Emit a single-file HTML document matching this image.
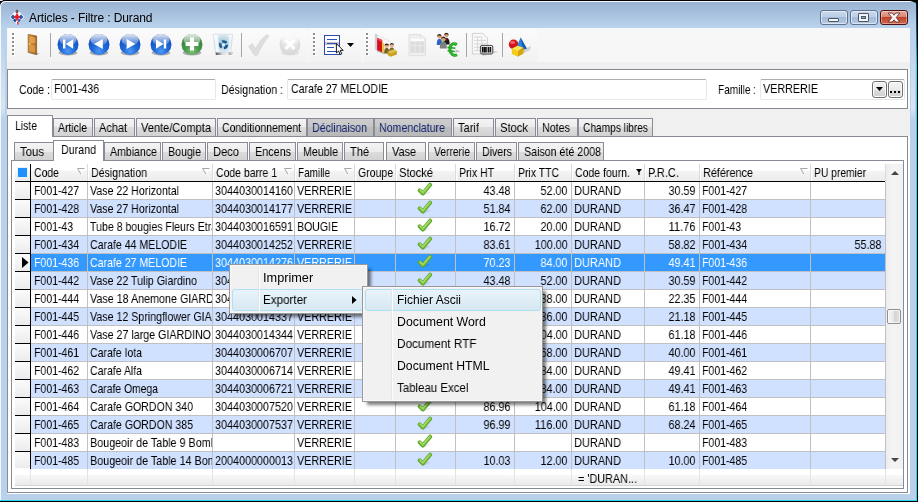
<!DOCTYPE html>
<html lang="fr"><head><meta charset="utf-8"><title>Articles - Filtre : Durand</title>
<style>
html,body{margin:0;padding:0}
body{width:918px;height:502px;overflow:hidden;background:#000;position:relative;font-family:"Liberation Sans",sans-serif}
div,span,svg{position:absolute;box-sizing:border-box}
.t,.m{will-change:transform}
.t{font:13px/15px "Liberation Sans",sans-serif;white-space:nowrap;transform:scaleX(.8);transform-origin:0 0;color:#000}
.t.r{transform-origin:100% 0}
.m{font:12px/15px "Liberation Sans",sans-serif;white-space:nowrap;color:#000}
#frame{left:-1px;top:0;width:918px;height:501px;border:1px solid #000;border-right-color:#27d6f2;border-bottom-color:#27d6f2;border-radius:6px 7px 0 0;background:#b9d1ea;box-shadow:inset 1px 1px 0 #f4f8fc}
#cap{left:1px;top:2px;width:915px;height:26px;background:linear-gradient(#99b3d1,#a9c2df 50%,#bad3ed);border-radius:5px 5px 0 0}
#client{left:7px;top:28px;width:903px;height:466px;background:#f0f0f0}
.cb{top:10px;height:15px;width:28px;border:1px solid #5f7291;border-radius:3px;background:linear-gradient(#c9d9ec 0,#bccfe6 45%,#a3bbd9 50%,#b4c9e3 100%);box-shadow:inset 0 0 0 1px rgba(255,255,255,.55)}
.cb.x{border-color:#4a1414;background:linear-gradient(#e7ab9d 0,#d98676 45%,#c2432b 50%,#cf6a4c 100%);box-shadow:inset 0 0 0 1px rgba(255,255,255,.35)}
.tab{border:1px solid #898c95;border-bottom:none;background:linear-gradient(#f4f4f4 0,#ececec 50%,#dddddd 50%,#d2d2d2 100%)}
.tab.dis{background:linear-gradient(#cdcdcd 0,#c6c6c6 50%,#bcbcbc 50%,#b9b9b9 100%)}
.tab.sel{background:#fff}
.inp{top:79px;height:21px;border:1px solid #e3e9ef;border-top-color:#abadb3;border-radius:2px;background:#fff}
.vl{top:0;width:1px;background:#c0c0c0}
.row{left:16px;width:854px;height:18px}
.hl{left:0;width:870px;height:1px;background:#c0c0c0}
.cell{top:0;height:18px;overflow:hidden}
.menu{background:#f1f1f1;border:1px solid #979797;box-shadow:inset 0 0 0 1px #f8f8f8,4px 4px 3px -1px rgba(0,0,0,.5)}
.mh{border:1px solid #aedff5;border-radius:3px;background:linear-gradient(#e9f3f9,#d6e8f2)}
.gut{width:2px;background:linear-gradient(90deg,#e2e3e3 50%,#fff 50%)}
.grip{width:3px;height:23px;background:repeating-linear-gradient(rgba(255,255,255,0) 0,rgba(255,255,255,0) 1px,#fff 1px,#fff 3px,rgba(255,255,255,0) 3px,rgba(255,255,255,0) 4px) 1px 0/2px 100% no-repeat,repeating-linear-gradient(#8c8c8c 0,#8c8c8c 2px,rgba(255,255,255,0) 2px,rgba(255,255,255,0) 4px) 0 0/2px 100% no-repeat}
.sep{width:1px;height:24px;background:#a6a6a6}
</style></head><body>

<div style="left:0;top:0;width:3px;height:1px;background:#e4e9f6"></div><div id="frame"></div><div id="cap"></div>
<div style="left:916px;top:4px;width:1px;height:60px;background:linear-gradient(#0b1c33,#1d5f86 50%,#27d6f2)"></div>
<div style="left:911px;top:36px;width:4px;height:84px;background:linear-gradient(rgba(255,255,255,0),rgba(255,255,255,.45) 85%,rgba(255,255,255,0))"></div>
<div style="left:1px;top:36px;width:4px;height:84px;background:linear-gradient(rgba(255,255,255,0),rgba(255,255,255,.45) 85%,rgba(255,255,255,0))"></div>
<svg style="left:8px;top:8px" width="18" height="18" viewBox="0 0 18 18">
<polygon points="9,1.500 16.500,9 9,16.500 1.500,9" fill="#f6f8fc"/>
<polygon points="2.600,9 5,6.600 7.400,9 5,11.400" fill="#2c55a4"/>
<polygon points="10.600,9 13,6.600 15.400,9 13,11.400" fill="#2c55a4"/>
<polygon points="5,12 7,10.600 8.600,12.600 7,14.400" fill="#24468e"/>
<polygon points="9.400,12.600 11,10.600 13,12 11,14.400" fill="#3a62b0"/>
<polygon points="9,4.600 10.400,7.600 12.400,9 10.400,10.400 9,13 7.600,10.400 5.600,9 7.600,7.600" fill="#ee1c24"/>
<ellipse cx="9" cy="3.400" rx="1.500" ry="1.900" fill="#6e5c58"/>
<rect x="9" y="13.600" width="1.600" height="3" fill="#d63c3c"/>
</svg>
<span class="m" style="left:29px;top:11px;letter-spacing:-.1px">Articles - Filtre : Durand</span>
<div class="cb" style="left:820px"></div><div class="cb" style="left:850px"></div><div class="cb x" style="left:880px"></div>
<div style="left:828px;top:18px;width:11px;height:4px;background:#f4f4f4;border:1px solid #4a5568;border-radius:1px"></div>
<div style="left:858px;top:13px;width:11px;height:9px;background:#f4f4f4;border:1px solid #4a5568;border-radius:1px"></div><div style="left:861px;top:16px;width:5px;height:3px;background:#8ea9cb;border:1px solid #4a5568"></div>
<svg style="left:887px;top:12px" width="14" height="11" viewBox="0 0 14 11"><path d="M1.2 1 L5.2 1 L7 3.2 L8.8 1 L12.8 1 L9.2 5.5 L12.800 10 L8.8 10 L7 7.8 L5.2 10 L1.2 10 L4.8 5.5 Z" fill="#f8f8f8" stroke="#6a3434" stroke-width=".9"/></svg>
<div id="client"></div>
<div style="left:7px;top:28px;width:903px;height:34px;background:#f7f7f7"></div>
<div style="left:7px;top:62px;width:903px;height:7px;background:#efefef"></div>
<div style="left:8px;top:29px;width:300px;height:33px;background:linear-gradient(#fbfbfb,#f6f6f6 60%,#f2f2f2);border-radius:4px"></div>
<div style="left:309px;top:29px;width:53px;height:33px;background:linear-gradient(#fbfbfb,#f6f6f6 60%,#f2f2f2);border-radius:4px"></div>
<div style="left:363px;top:29px;width:175px;height:33px;background:linear-gradient(#fbfbfb,#f6f6f6 60%,#f2f2f2);border-radius:4px"></div>
<svg style="left:12px;top:33px" width="3" height="23" viewBox="0 0 3 23" shape-rendering="crispEdges"><rect x="1" y="1" width="2" height="2" fill="#fff"/><rect x="0" y="0" width="2" height="2" fill="#8e8e8e"/><rect x="1" y="5" width="2" height="2" fill="#fff"/><rect x="0" y="4" width="2" height="2" fill="#8e8e8e"/><rect x="1" y="9" width="2" height="2" fill="#fff"/><rect x="0" y="8" width="2" height="2" fill="#8e8e8e"/><rect x="1" y="13" width="2" height="2" fill="#fff"/><rect x="0" y="12" width="2" height="2" fill="#8e8e8e"/><rect x="1" y="17" width="2" height="2" fill="#fff"/><rect x="0" y="16" width="2" height="2" fill="#8e8e8e"/><rect x="1" y="21" width="2" height="2" fill="#fff"/><rect x="0" y="20" width="2" height="2" fill="#8e8e8e"/></svg>
<svg style="left:313px;top:33px" width="3" height="23" viewBox="0 0 3 23" shape-rendering="crispEdges"><rect x="1" y="1" width="2" height="2" fill="#fff"/><rect x="0" y="0" width="2" height="2" fill="#8e8e8e"/><rect x="1" y="5" width="2" height="2" fill="#fff"/><rect x="0" y="4" width="2" height="2" fill="#8e8e8e"/><rect x="1" y="9" width="2" height="2" fill="#fff"/><rect x="0" y="8" width="2" height="2" fill="#8e8e8e"/><rect x="1" y="13" width="2" height="2" fill="#fff"/><rect x="0" y="12" width="2" height="2" fill="#8e8e8e"/><rect x="1" y="17" width="2" height="2" fill="#fff"/><rect x="0" y="16" width="2" height="2" fill="#8e8e8e"/><rect x="1" y="21" width="2" height="2" fill="#fff"/><rect x="0" y="20" width="2" height="2" fill="#8e8e8e"/></svg>
<svg style="left:366px;top:33px" width="3" height="23" viewBox="0 0 3 23" shape-rendering="crispEdges"><rect x="1" y="1" width="2" height="2" fill="#fff"/><rect x="0" y="0" width="2" height="2" fill="#8e8e8e"/><rect x="1" y="5" width="2" height="2" fill="#fff"/><rect x="0" y="4" width="2" height="2" fill="#8e8e8e"/><rect x="1" y="9" width="2" height="2" fill="#fff"/><rect x="0" y="8" width="2" height="2" fill="#8e8e8e"/><rect x="1" y="13" width="2" height="2" fill="#fff"/><rect x="0" y="12" width="2" height="2" fill="#8e8e8e"/><rect x="1" y="17" width="2" height="2" fill="#fff"/><rect x="0" y="16" width="2" height="2" fill="#8e8e8e"/><rect x="1" y="21" width="2" height="2" fill="#fff"/><rect x="0" y="20" width="2" height="2" fill="#8e8e8e"/></svg>
<div class="sep" style="left:50px;top:33px"></div>
<div class="sep" style="left:241px;top:33px"></div>
<div class="sep" style="left:466px;top:33px"></div>
<div class="sep" style="left:502px;top:33px"></div>
<svg width="0" height="0" style="left:0;top:0"><defs>
<radialGradient id="gb" cx=".5" cy=".82" r=".8"><stop offset="0" stop-color="#4f9af6"/><stop offset=".4" stop-color="#2069d8"/><stop offset=".8" stop-color="#1553c2"/><stop offset="1" stop-color="#0c3c9e"/></radialGradient>
<radialGradient id="gg" cx=".5" cy=".82" r=".8"><stop offset="0" stop-color="#7cc47c"/><stop offset=".4" stop-color="#4a984c"/><stop offset=".8" stop-color="#3a843c"/><stop offset="1" stop-color="#2a642c"/></radialGradient>
<radialGradient id="gy" cx=".5" cy=".3" r=".75"><stop offset="0" stop-color="#f2f2f2"/><stop offset="1" stop-color="#d4d4d4"/></radialGradient>
<linearGradient id="gl" x1="0" y1="0" x2="0" y2="1"><stop offset="0" stop-color="#fff" stop-opacity=".9"/><stop offset="1" stop-color="#fff" stop-opacity=".12"/></linearGradient>
<linearGradient id="door" x1="0" y1="0" x2="1" y2="0"><stop offset="0" stop-color="#d89a48"/><stop offset="1" stop-color="#a8641c"/></linearGradient>
<linearGradient id="chk" x1="0" y1="0" x2="0" y2="1"><stop offset="0" stop-color="#b4de6e"/><stop offset="1" stop-color="#4f9a22"/></linearGradient>
<symbol id="ck" viewBox="0 0 16 15"><path d="M7 13.600L14.400 9.800 9.600 10.800Z" fill="#000" opacity=".13"/><path d="M2.700 8.300L5.900 11.500 13.100 2.700" fill="none" stroke="#5da82e" stroke-width="4" stroke-linecap="round" stroke-linejoin="round"/><path d="M2.900 8.100L5.900 11 12.900 2.600" fill="none" stroke="#92d050" stroke-width="2" stroke-linecap="round" stroke-linejoin="round"/><path d="M3.200 7.700L5.900 10.300 12.600 2.500" fill="none" stroke="#b6e27c" stroke-width=".8" stroke-linecap="round" stroke-linejoin="round"/></symbol>
</defs></svg>
<svg style="left:26px;top:33px" width="14" height="24" viewBox="0 0 14 24">
<polygon points="1,19.6 10.4,22 13.6,20.6 4,19" fill="#000" opacity=".3"/>
<polygon points="2.2,1.4 10.6,3 10.6,21.6 2.2,19.2" fill="url(#door)" stroke="#8a5418" stroke-width=".7"/>
<polygon points="3.8,3.6 9.2,4.8 9.2,10.6 3.8,10" fill="#e8aa58" opacity=".75"/>
<polygon points="3.8,11.8 9.2,12.6 9.2,19.6 3.8,18" fill="#e0a24e" opacity=".7"/>
<circle cx="3.6" cy="11" r=".9" fill="#f4d25a"/></svg>
<svg style="left:56px;top:32px" width="24" height="26" viewBox="0 0 24 26">
<ellipse cx="12" cy="20.8" rx="9.4" ry="2.6" fill="#000" opacity=".3"/>
<circle cx="12" cy="12.4" r="10.5" fill="url(#gb)"/>
<ellipse cx="12" cy="7.800" rx="8.600" ry="5.800" fill="url(#gl)"/>
<path d="M7 7.4h2.4v9.2H7z M17.2 7.2v9.6L9.8 12z" fill="#fff"/></svg>
<svg style="left:87px;top:32px" width="24" height="26" viewBox="0 0 24 26">
<ellipse cx="12" cy="20.8" rx="9.4" ry="2.6" fill="#000" opacity=".3"/>
<circle cx="12" cy="12.4" r="10.5" fill="url(#gb)"/>
<ellipse cx="12" cy="7.800" rx="8.600" ry="5.800" fill="url(#gl)"/>
<path d="M15.8 7v10L7 12z" fill="#fff"/></svg>
<svg style="left:118px;top:32px" width="24" height="26" viewBox="0 0 24 26">
<ellipse cx="12" cy="20.8" rx="9.4" ry="2.6" fill="#000" opacity=".3"/>
<circle cx="12" cy="12.4" r="10.5" fill="url(#gb)"/>
<ellipse cx="12" cy="7.800" rx="8.600" ry="5.800" fill="url(#gl)"/>
<path d="M8.6 7v10L17.4 12z" fill="#fff"/></svg>
<svg style="left:149px;top:32px" width="24" height="26" viewBox="0 0 24 26">
<ellipse cx="12" cy="20.8" rx="9.4" ry="2.6" fill="#000" opacity=".3"/>
<circle cx="12" cy="12.4" r="10.5" fill="url(#gb)"/>
<ellipse cx="12" cy="7.800" rx="8.600" ry="5.800" fill="url(#gl)"/>
<path d="M14.8 7.4h2.4v9.2h-2.4z M7 7.2v9.6L14.4 12z" fill="#fff"/></svg>
<svg style="left:180px;top:32px" width="24" height="26" viewBox="0 0 24 26">
<ellipse cx="12" cy="20.8" rx="9.4" ry="2.6" fill="#000" opacity=".3"/>
<circle cx="12" cy="12.4" r="10.5" fill="url(#gg)"/>
<ellipse cx="12" cy="7.800" rx="8.600" ry="5.800" fill="url(#gl)"/>
<path d="M10 5.6h4v4.4h4.4v4H14v4.4h-4V14H5.6v-4H10z" fill="#fff"/></svg>
<svg style="left:212px;top:33px" width="24" height="24" viewBox="0 0 24 24">
<defs><linearGradient id="tb" x1="0" y1="0" x2="1" y2="0"><stop offset="0" stop-color="#4a4a4a"/><stop offset=".45" stop-color="#d8d8d8"/><stop offset=".8" stop-color="#f4f4f4"/><stop offset="1" stop-color="#8a8a8a"/></linearGradient>
<radialGradient id="tg" cx=".5" cy=".5" r=".55"><stop offset="0" stop-color="#8fbcd6"/><stop offset="1" stop-color="#e9f1f6"/></radialGradient></defs>
<polygon points="17,19.600 21.400,19 20,21.800 17,22" fill="#000" opacity=".18"/>
<polygon points="3.500,19 18.500,19 18.200,22 3.900,22" fill="url(#tb)"/>
<polygon points="1.200,1.200 20.800,1.200 18.600,19.200 3.400,19.200" fill="url(#tg)" stroke="#cfdbe3" stroke-width=".7"/>
<polygon points="2,2 6,2 6.800,18.600 4.200,18.600" fill="#fff" opacity=".75"/>
<polygon points="17,2 20,2 18,18.600 16.600,18.600" fill="#fff" opacity=".55"/>
<circle cx="11.500" cy="11.700" r="3.300" fill="none" stroke="#17598c" stroke-width="2.500" stroke-dasharray="4.600 2.300"/>
<circle cx="11.500" cy="11.700" r="1.500" fill="#e6f0f6"/></svg>
<svg style="left:247px;top:33px" width="24" height="24" viewBox="0 0 24 24"><path d="M1.6 13.4 L5.2 10.4 L8.6 15.6 C11.4 9.6 15.4 4.6 20.2 1.4 L22 3.4 C17.6 8 13.6 14.6 10.4 22 L7.6 22.4 Z" fill="#dedede" stroke="#d2d2d2" stroke-width=".6"/></svg>
<svg style="left:278px;top:32px" width="24" height="26" viewBox="0 0 24 26">
<ellipse cx="12" cy="20.8" rx="9.4" ry="2.6" fill="#000" opacity=".08"/>
<circle cx="12" cy="12.4" r="10.5" fill="url(#gy)"/>
<ellipse cx="12" cy="7.800" rx="8.600" ry="5.800" fill="url(#gl)"/>
<path d="M6.4 8.6l2.2-2.2L12 9.8l3.4-3.4 2.2 2.2L14.2 12l3.4 3.4-2.2 2.2L12 14.2l-3.4 3.4-2.2-2.2L9.800 12z" fill="#fff" transform="translate(0 .4)"/></svg>
<svg style="left:323px;top:34px" width="22" height="23" viewBox="0 0 22 23">
<rect x="1.500" y="1.500" width="15" height="19" fill="#fff" stroke="#2a4aae" stroke-width="1"/>
<rect x="2" y="8" width="14" height="3" fill="#c4c6cc"/>
<path d="M4 5.500h10M4 9.500h10M4 13.500h7M4 17.500h10" stroke="#2c52b8" stroke-width="1.200"/>
<path d="M13.4 9.6v9.4l2.2-2 1.6 3.6 1.6-.8-1.6-3.4h3z" fill="#fff" stroke="#000" stroke-width=".9"/></svg>
<svg style="left:347px;top:43px" width="7" height="4" viewBox="0 0 7 4"><path d="M0 0h7L3.5 4z" fill="#000"/></svg>
<svg style="left:374px;top:33px" width="25" height="25" viewBox="0 0 25 25">
<polygon points="1.400,1 2.900,1.600 2.900,17.400 1.400,16.400" fill="#cfcfd4" stroke="#b4b4bc" stroke-width=".4"/>
<path d="M2.900 2.200L16.500 8.400" stroke="#d8d8dc" stroke-width=".7"/>
<polygon points="3.100,4.800 8.200,7 8.200,19.400 3.100,17.200" fill="#d4101a"/>
<polygon points="3.100,4.800 8.200,7 8.200,9 3.100,6.800" fill="#ee4a4a"/>
<polygon points="8.200,9.400 10.400,10.200 10.400,20.200 8.200,19.400" fill="#e8c43a"/>
<polygon points="3.100,17.200 10.400,20.200 10.400,21.200 3.100,18.400" fill="#a8a8b0"/>
<path d="M10.200 20.400c0-4 .8-5.400 2.600-5.400s2.600 1.400 2.600 5.400z" fill="#746224"/>
<path d="M15.200 19.600c0-4 .8-5.200 2.600-5.200s2.600 1.200 2.600 5.200z" fill="#806c28"/>
<circle cx="12.800" cy="13" r="2" fill="#e8b48c"/><circle cx="17.800" cy="12.400" r="2" fill="#e8b48c"/>
<path d="M10.700 12.800c.1-3 4.100-3 4.200 0c-1.400-1.200-2.800-1.200-4.200 0z M15.700 12.200c.1-3 4.100-3 4.200 0c-1.400-1.200-2.800-1.200-4.200 0z" fill="#2e2218"/>
<polygon points="13.600,18.800 19.800,16.600 22.900,18 22.900,21.400 16.600,23.800 13.600,22" fill="#c8a022"/>
<polygon points="13.600,18.800 19.800,16.600 22.900,18 16.600,20.400" fill="#e4c04a"/>
</svg>
<svg style="left:408px;top:33px" width="20" height="24" viewBox="0 0 20 24">
<path d="M1 1.600h11.600l5 4.400V22.600H1z" fill="#efefef" stroke="#dadada" stroke-width=".8"/>
<path d="M12.600 1.600v4.400h5z" fill="#f8f8f8" stroke="#d4d4d4" stroke-width=".6"/>
<rect x="2.600" y="5.800" width="13.800" height="2.600" fill="#fdfdfd"/>
<rect x="2.600" y="8.400" width="13.800" height="11.400" fill="#dcdcdc"/>
<path d="M7 8.400v11.400M11.800 8.400v11.400M2.600 12.400h13.800" stroke="#ececec" stroke-width=".9"/></svg>
<svg style="left:436px;top:32px" width="26" height="26" viewBox="0 0 26 26">
<path d="M.8 13c0-4.600 .8-6 2.700-6s2.700 1.400 2.700 6z" fill="#2a64c8"/>
<circle cx="3.400" cy="4.600" r="2.100" fill="#d8a07c"/>
<path d="M7.400 12.400c0-4.800 1-6.400 3-6.400s3.200 1.600 3.200 6.400z" fill="#1a1a1a"/><path d="M10 6.400l.5 3.400.5-3.400z" fill="#d82020"/>
<circle cx="10.400" cy="3.400" r="2.100" fill="#d8a07c"/>
<path d="M3.800 16.600c0-5 1-7 3.500-7s3.500 2 3.500 7z" fill="#808080"/><path d="M6.900 9.800l.5 3.600.5-3.600z" fill="#28a040"/>
<circle cx="7.300" cy="7.200" r="2.300" fill="#d8a07c"/>
<path d="M1.200 4.400c.1-3.200 4.300-3.200 4.400 0c-1.400-1.300-3-1.300-4.400 0z M8.200 3.200c.1-3.200 4.300-3.200 4.400 0c-1.400-1.300-3-1.300-4.400 0z M4.900 7c.1-3.400 4.700-3.400 4.800 0c-1.600-1.400-3.200-1.400-4.800 0z" fill="#34261a"/>
<polygon points="19.500,17.600 24.400,19.400 19.500,20.400" fill="#bdbdbd"/>
<path d="M20.800 12.800c-3.600-2.400-7-.2-6.800 4.400s3.600 7.400 7 5.600" fill="none" stroke="#1a8c1a" stroke-width="2.900"/>
<path d="M20.800 12.800c-3.600-2.400-7-.2-6.800 4.400s3.600 7.400 7 5.600" fill="none" stroke="#2ec02e" stroke-width="1.500"/>
<path d="M11.400 15.400l8 .8M11.600 18.600l7.200 .9" stroke="#22a822" stroke-width="1.600"/></svg>
<svg style="left:471px;top:32px" width="28" height="26" viewBox="0 0 28 26">
<polygon points="10,22 25,19 27,20 12,24" fill="#000" opacity=".15"/>
<path d="M1.4 1.4h10.4l4.6 4.4V22H1.4z" fill="#f8f8f8" stroke="#c8c8c8" stroke-width=".8"/>
<path d="M3 5h8M3 8.4h12M3 11.8h12M3 15.2h12M3 18.6h8M6.6 5v14M10.8 5v14" stroke="#d2d6d2" stroke-width=".9"/>
<rect x="9.4" y="13.4" width="12.4" height="8.6" rx="1.6" fill="#e4e4e4" stroke="#444" stroke-width="1"/>
<path d="M11.6 15v5.4M13.4 15v5.4M15 15v5.4M17.4 15v5.4M19.4 15v5.4" stroke="#111" stroke-width="1.5"/></svg>
<svg style="left:507px;top:36px" width="26" height="22" viewBox="0 0 26 22">
<polygon points="16,14 24,10 23,14 17,17" fill="#000" opacity=".15"/>
<circle cx="6.6" cy="8.4" r="4.8" fill="#d4141c"/><ellipse cx="5.6" cy="6.4" rx="2.6" ry="1.6" fill="#f08080" opacity=".7"/>
<polygon points="13.6,1.6 19.8,12.4 14,14.4 9.6,11" fill="#2a86d8"/><polygon points="13.6,1.6 19.8,12.4 16,13.6" fill="#1a5ca8"/>
<polygon points="4.8,12.6 10.6,9.8 16.6,11.8 10.8,14.8" fill="#fce44a"/>
<polygon points="4.8,12.6 10.8,14.8 10.8,20.8 4.8,18" fill="#f4cc14"/>
<polygon points="10.8,14.8 16.6,11.8 16.6,17.6 10.8,20.8" fill="#d8a408"/></svg>
<div style="left:7px;top:69px;width:903px;height:40px;background:#fafafa"></div>
<div style="left:7px;top:69px;width:901px;height:40px;border:1px solid #828790;background:#fff"></div>
<span class="t" style="top:82px;left:19px;transform:scaleX(0.8094);">Code :</span>
<div class="inp" style="left:51px;width:165px"></div>
<span class="t" style="top:81px;left:54px;transform:scaleX(0.8086);">F001-436</span>
<span class="t" style="top:82px;left:221px;transform:scaleX(0.8171);">Désignation :</span>
<div class="inp" style="left:287px;width:420px"></div>
<span class="t" style="top:81px;left:291px;transform:scaleX(0.8137);">Carafe 27 MELODIE</span>
<span class="t" style="top:82px;left:718px;transform:scaleX(0.7736);">Famille :</span>
<div class="inp" style="left:760px;width:145px"></div>
<span class="t" style="top:81px;left:763px;transform:scaleX(0.8276);">VERRERIE</span>
<div style="left:872px;top:81px;width:15px;height:17px;border:1px solid #707070;border-radius:3px;background:linear-gradient(#f2f2f2 0,#ebebeb 50%,#dddddd 50%,#cfcfcf 100%);box-shadow:inset 0 0 0 1px #fcfcfc"></div>
<svg style="left:876px;top:87px" width="7" height="4" viewBox="0 0 7 4"><path d="M0 0h7L3.5 4z" fill="#000"/></svg>
<div style="left:888px;top:81px;width:15px;height:17px;border:1px solid #707070;border-radius:3px;background:linear-gradient(#f2f2f2 0,#ebebeb 50%,#dddddd 50%,#cfcfcf 100%);box-shadow:inset 0 0 0 1px #fcfcfc"></div>
<div style="left:890px;top:91px;width:2px;height:2px;background:#000;box-shadow:4px 0 0 #000,8px 0 0 #000"></div>
<div style="left:7px;top:136px;width:903px;height:358px;background:#fff"></div>
<div style="left:7px;top:136px;width:901px;height:357px;border:1px solid #898c95;background:#fff"></div>
<div class="tab" style="left:53px;top:118px;width:40px;height:18px"></div>
<span class="t" style="top:120px;left:58px;transform:scaleX(0.8029);">Article</span>
<div class="tab" style="left:94px;top:118px;width:41px;height:18px"></div>
<span class="t" style="top:120px;left:99px;transform:scaleX(0.8423);">Achat</span>
<div class="tab" style="left:136px;top:118px;width:80px;height:18px"></div>
<span class="t" style="top:120px;left:141px;transform:scaleX(0.8497);">Vente/Compta</span>
<div class="tab" style="left:217px;top:118px;width:90px;height:18px"></div>
<span class="t" style="top:120px;left:222px;transform:scaleX(0.8038);">Conditionnement</span>
<div class="tab dis" style="left:307px;top:118px;width:67px;height:18px"></div>
<span class="t" style="top:120px;left:312px;color:#14246e;transform:scaleX(0.8184);">Déclinaison</span>
<div class="tab dis" style="left:374px;top:118px;width:78px;height:18px"></div>
<span class="t" style="top:120px;left:379px;color:#14246e;transform:scaleX(0.8156);">Nomenclature</span>
<div class="tab" style="left:453px;top:118px;width:41px;height:18px"></div>
<span class="t" style="top:120px;left:458px;transform:scaleX(0.8551);">Tarif</span>
<div class="tab" style="left:495px;top:118px;width:41px;height:18px"></div>
<span class="t" style="top:120px;left:500px;transform:scaleX(0.8612);">Stock</span>
<div class="tab" style="left:537px;top:118px;width:41px;height:18px"></div>
<span class="t" style="top:120px;left:542px;transform:scaleX(0.8245);">Notes</span>
<div class="tab" style="left:578px;top:118px;width:75px;height:18px"></div>
<span class="t" style="top:120px;left:583px;transform:scaleX(0.7823);">Champs libres</span>
<div class="tab sel" style="left:7px;top:115px;width:46px;height:22px"></div>
<span class="t" style="top:118px;left:15px;transform:scaleX(0.8012);">Liste</span>
<div style="left:11px;top:160px;width:893px;height:329px;border:1px solid #898c95;background:#fff"></div>
<div class="tab" style="left:14px;top:142px;width:40px;height:18px"></div>
<span class="t" style="top:144px;left:20px;transform:scaleX(0.874);">Tous</span>
<div class="tab" style="left:104px;top:142px;width:57px;height:18px"></div>
<span class="t" style="top:144px;left:110px;transform:scaleX(0.813);">Ambiance</span>
<div class="tab" style="left:162px;top:142px;width:44px;height:18px"></div>
<span class="t" style="top:144px;left:168px;transform:scaleX(0.8152);">Bougie</span>
<div class="tab" style="left:207px;top:142px;width:41px;height:18px"></div>
<span class="t" style="top:144px;left:213px;transform:scaleX(0.8567);">Deco</span>
<div class="tab" style="left:249px;top:142px;width:47px;height:18px"></div>
<span class="t" style="top:144px;left:255px;transform:scaleX(0.8302);">Encens</span>
<div class="tab" style="left:297px;top:142px;width:46px;height:18px"></div>
<span class="t" style="top:144px;left:303px;transform:scaleX(0.8209);">Meuble</span>
<div class="tab" style="left:344px;top:142px;width:40px;height:18px"></div>
<span class="t" style="top:144px;left:350px;transform:scaleX(0.8482);">Thé</span>
<div class="tab" style="left:386px;top:142px;width:40px;height:18px"></div>
<span class="t" style="top:144px;left:392px;transform:scaleX(0.8372);">Vase</span>
<div class="tab" style="left:428px;top:142px;width:47px;height:18px"></div>
<span class="t" style="top:144px;left:434px;transform:scaleX(0.7909);">Verrerie</span>
<div class="tab" style="left:476px;top:142px;width:41px;height:18px"></div>
<span class="t" style="top:144px;left:482px;transform:scaleX(0.8144);">Divers</span>
<div class="tab" style="left:518px;top:142px;width:86px;height:18px"></div>
<span class="t" style="top:144px;left:524px;transform:scaleX(0.8195);">Saison été 2008</span>
<div class="tab sel" style="left:53px;top:140px;width:51px;height:21px"></div>
<span class="t" style="top:142px;left:61px;transform:scaleX(0.8209);">Durand</span>
<div style="left:15px;top:164px;width:870px;height:17px;background:linear-gradient(#fff 0,#fff 35%,#f3f3f3 45%,#ececec 100%)"></div>
<div style="left:15px;top:181px;width:870px;height:1px;background:#000"></div>
<div style="left:17px;top:167px;width:11px;height:11px;background:#1e90ff;border:1px solid #e8f0fa"></div>
<span class="t" style="top:165px;left:33.5px;transform:scaleX(0.8044);">Code</span>
<svg style="left:77px;top:168px" width="8" height="7" viewBox="0 0 8 7"><path d="M7.500 .5L4 6" fill="none" stroke="#fff" stroke-width="1"/><path d="M7.500 .5H.5L3.800 6" fill="none" stroke="#a6a6a6" stroke-width="1"/></svg>
<span class="t" style="top:165px;left:90.5px;transform:scaleX(0.8157);">Désignation</span>
<svg style="left:202px;top:168px" width="8" height="7" viewBox="0 0 8 7"><path d="M7.500 .5L4 6" fill="none" stroke="#fff" stroke-width="1"/><path d="M7.500 .5H.5L3.800 6" fill="none" stroke="#a6a6a6" stroke-width="1"/></svg>
<span class="t" style="top:165px;left:215.5px;transform:scaleX(0.8039);">Code barre 1</span>
<svg style="left:284px;top:168px" width="8" height="7" viewBox="0 0 8 7"><path d="M7.500 .5L4 6" fill="none" stroke="#fff" stroke-width="1"/><path d="M7.500 .5H.5L3.800 6" fill="none" stroke="#a6a6a6" stroke-width="1"/></svg>
<span class="t" style="top:165px;left:297.5px;transform:scaleX(0.7638);">Famille</span>
<svg style="left:344px;top:168px" width="8" height="7" viewBox="0 0 8 7"><path d="M7.500 .5L4 6" fill="none" stroke="#fff" stroke-width="1"/><path d="M7.500 .5H.5L3.800 6" fill="none" stroke="#a6a6a6" stroke-width="1"/></svg>
<span class="t" style="top:165px;left:357.5px;transform:scaleX(0.8072);">Groupe</span>
<span class="t" style="top:165px;left:398.5px;transform:scaleX(0.8555);">Stocké</span>
<span class="t" style="top:165px;left:458.5px;transform:scaleX(0.8078);">Prix HT</span>
<span class="t" style="top:165px;left:517.5px;transform:scaleX(0.8034);">Prix TTC</span>
<span class="t" style="top:165px;left:574.5px;transform:scaleX(0.8096);">Code fourn.</span>
<svg style="left:636px;top:169px" width="6" height="6" viewBox="0 0 6 6"><path d="M0 0h6L3.600 3v3h-1.200v-3z" fill="#000"/></svg>
<span class="t" style="top:165px;left:647.5px;transform:scaleX(0.8468);">P.R.C.</span>
<span class="t" style="top:165px;left:702.5px;transform:scaleX(0.8336);">Référence</span>
<svg style="left:800px;top:168px" width="8" height="7" viewBox="0 0 8 7"><path d="M7.500 .5L4 6" fill="none" stroke="#fff" stroke-width="1"/><path d="M7.500 .5H.5L3.800 6" fill="none" stroke="#a6a6a6" stroke-width="1"/></svg>
<span class="t" style="top:165px;left:813.5px;transform:scaleX(0.791);">PU premier</span>
<div style="left:87px;top:164px;width:1px;height:17px;background:#dcdcdc"></div><div style="left:88px;top:164px;width:1px;height:17px;background:#fff"></div>
<div style="left:212px;top:164px;width:1px;height:17px;background:#dcdcdc"></div><div style="left:213px;top:164px;width:1px;height:17px;background:#fff"></div>
<div style="left:294px;top:164px;width:1px;height:17px;background:#dcdcdc"></div><div style="left:295px;top:164px;width:1px;height:17px;background:#fff"></div>
<div style="left:354px;top:164px;width:1px;height:17px;background:#dcdcdc"></div><div style="left:355px;top:164px;width:1px;height:17px;background:#fff"></div>
<div style="left:395px;top:164px;width:1px;height:17px;background:#dcdcdc"></div><div style="left:396px;top:164px;width:1px;height:17px;background:#fff"></div>
<div style="left:455px;top:164px;width:1px;height:17px;background:#dcdcdc"></div><div style="left:456px;top:164px;width:1px;height:17px;background:#fff"></div>
<div style="left:514px;top:164px;width:1px;height:17px;background:#dcdcdc"></div><div style="left:515px;top:164px;width:1px;height:17px;background:#fff"></div>
<div style="left:571px;top:164px;width:1px;height:17px;background:#dcdcdc"></div><div style="left:572px;top:164px;width:1px;height:17px;background:#fff"></div>
<div style="left:644px;top:164px;width:1px;height:17px;background:#dcdcdc"></div><div style="left:645px;top:164px;width:1px;height:17px;background:#fff"></div>
<div style="left:699px;top:164px;width:1px;height:17px;background:#dcdcdc"></div><div style="left:700px;top:164px;width:1px;height:17px;background:#fff"></div>
<div style="left:810px;top:164px;width:1px;height:17px;background:#dcdcdc"></div><div style="left:811px;top:164px;width:1px;height:17px;background:#fff"></div>
<div style="left:885px;top:164px;width:1px;height:17px;background:#dcdcdc"></div><div style="left:886px;top:164px;width:1px;height:17px;background:#fff"></div>
<div style="left:15px;top:182px;width:15px;height:17px;background:linear-gradient(#fbfbfb,#ececec)"></div>
<div style="left:15px;top:199px;width:16px;height:1px;background:#000"></div>
<div style="left:31px;top:182px;width:854px;height:18px;background:#fff"></div>
<div style="left:31px;top:199px;width:854px;height:1px;background:#c0c0c0"></div>
<span class="t" style="top:183px;left:34px;color:#000;transform:scaleX(0.8086);">F001-427</span>
<div style="left:88px;top:182px;width:124px;height:18px;overflow:hidden"><span class="t" style="left:2px;top:1px;color:#000;transform:scaleX(0.8175)">Vase 22 Horizontal</span></div>
<span class="t" style="top:183px;left:215px;color:#000;transform:scaleX(0.8299);">3044030014160</span>
<span class="t" style="top:183px;left:297px;color:#000;transform:scaleX(0.8276);">VERRERIE</span>
<svg style="left:417px;top:182px" width="16" height="15"><use href="#ck"/></svg>
<span class="t r" style="top:183px;right:407px;color:#000;transform:scaleX(0.83);">43.48</span>
<span class="t r" style="top:183px;right:350px;color:#000;transform:scaleX(0.83);">52.00</span>
<span class="t" style="top:183px;left:574px;color:#000;transform:scaleX(0.8451);">DURAND</span>
<span class="t r" style="top:183px;right:222px;color:#000;transform:scaleX(0.83);">30.59</span>
<span class="t" style="top:183px;left:702px;color:#000;transform:scaleX(0.8086);">F001-427</span>
<div style="left:15px;top:200px;width:15px;height:17px;background:linear-gradient(#fbfbfb,#ececec)"></div>
<div style="left:15px;top:217px;width:16px;height:1px;background:#000"></div>
<div style="left:31px;top:200px;width:854px;height:18px;background:#d0e0ff"></div>
<div style="left:31px;top:217px;width:854px;height:1px;background:#c0c0c0"></div>
<span class="t" style="top:201px;left:34px;color:#000;transform:scaleX(0.8086);">F001-428</span>
<div style="left:88px;top:200px;width:124px;height:18px;overflow:hidden"><span class="t" style="left:2px;top:1px;color:#000;transform:scaleX(0.8175)">Vase 27 Horizontal</span></div>
<span class="t" style="top:201px;left:215px;color:#000;transform:scaleX(0.8299);">3044030014177</span>
<span class="t" style="top:201px;left:297px;color:#000;transform:scaleX(0.8276);">VERRERIE</span>
<svg style="left:417px;top:200px" width="16" height="15"><use href="#ck"/></svg>
<span class="t r" style="top:201px;right:407px;color:#000;transform:scaleX(0.83);">51.84</span>
<span class="t r" style="top:201px;right:350px;color:#000;transform:scaleX(0.83);">62.00</span>
<span class="t" style="top:201px;left:574px;color:#000;transform:scaleX(0.8451);">DURAND</span>
<span class="t r" style="top:201px;right:222px;color:#000;transform:scaleX(0.83);">36.47</span>
<span class="t" style="top:201px;left:702px;color:#000;transform:scaleX(0.8086);">F001-428</span>
<div style="left:15px;top:218px;width:15px;height:17px;background:linear-gradient(#fbfbfb,#ececec)"></div>
<div style="left:15px;top:235px;width:16px;height:1px;background:#000"></div>
<div style="left:31px;top:218px;width:854px;height:18px;background:#fff"></div>
<div style="left:31px;top:235px;width:854px;height:1px;background:#c0c0c0"></div>
<span class="t" style="top:219px;left:34px;color:#000;transform:scaleX(0.8055);">F001-43</span>
<div style="left:88px;top:218px;width:124px;height:18px;overflow:hidden"><span class="t" style="left:2px;top:1px;color:#000;transform:scaleX(0.8129)">Tube 8 bougies Fleurs Etranges</span></div>
<span class="t" style="top:219px;left:215px;color:#000;transform:scaleX(0.8299);">3044030016591</span>
<span class="t" style="top:219px;left:297px;color:#000;transform:scaleX(0.8108);">BOUGIE</span>
<svg style="left:417px;top:218px" width="16" height="15"><use href="#ck"/></svg>
<span class="t r" style="top:219px;right:407px;color:#000;transform:scaleX(0.83);">16.72</span>
<span class="t r" style="top:219px;right:350px;color:#000;transform:scaleX(0.83);">20.00</span>
<span class="t" style="top:219px;left:574px;color:#000;transform:scaleX(0.8451);">DURAND</span>
<span class="t r" style="top:219px;right:222px;color:#000;transform:scaleX(0.8553);">11.76</span>
<span class="t" style="top:219px;left:702px;color:#000;transform:scaleX(0.8055);">F001-43</span>
<div style="left:15px;top:236px;width:15px;height:17px;background:linear-gradient(#fbfbfb,#ececec)"></div>
<div style="left:15px;top:253px;width:16px;height:1px;background:#000"></div>
<div style="left:31px;top:236px;width:854px;height:18px;background:#d0e0ff"></div>
<div style="left:31px;top:253px;width:854px;height:1px;background:#c0c0c0"></div>
<span class="t" style="top:237px;left:34px;color:#000;transform:scaleX(0.8086);">F001-434</span>
<div style="left:88px;top:236px;width:124px;height:18px;overflow:hidden"><span class="t" style="left:2px;top:1px;color:#000;transform:scaleX(0.8137)">Carafe 44 MELODIE</span></div>
<span class="t" style="top:237px;left:215px;color:#000;transform:scaleX(0.8299);">3044030014252</span>
<span class="t" style="top:237px;left:297px;color:#000;transform:scaleX(0.8276);">VERRERIE</span>
<svg style="left:417px;top:236px" width="16" height="15"><use href="#ck"/></svg>
<span class="t r" style="top:237px;right:407px;color:#000;transform:scaleX(0.83);">83.61</span>
<span class="t r" style="top:237px;right:350px;color:#000;transform:scaleX(0.8299);">100.00</span>
<span class="t" style="top:237px;left:574px;color:#000;transform:scaleX(0.8451);">DURAND</span>
<span class="t r" style="top:237px;right:222px;color:#000;transform:scaleX(0.83);">58.82</span>
<span class="t" style="top:237px;left:702px;color:#000;transform:scaleX(0.8086);">F001-434</span>
<span class="t r" style="top:237px;right:36px;color:#000;transform:scaleX(0.83);">55.88</span>
<div style="left:15px;top:254px;width:15px;height:17px;background:linear-gradient(#fbfbfb,#ececec)"></div>
<div style="left:15px;top:271px;width:16px;height:1px;background:#000"></div>
<div style="left:31px;top:254px;width:854px;height:18px;background:#3399ff"></div>
<div style="left:31px;top:271px;width:854px;height:1px;background:#c0c0c0"></div>
<span class="t" style="top:255px;left:34px;color:#fff;transform:scaleX(0.8086);">F001-436</span>
<div style="left:88px;top:254px;width:124px;height:18px;overflow:hidden"><span class="t" style="left:2px;top:1px;color:#fff;transform:scaleX(0.8137)">Carafe 27 MELODIE</span></div>
<span class="t" style="top:255px;left:215px;color:#fff;transform:scaleX(0.8299);">3044030014276</span>
<span class="t" style="top:255px;left:297px;color:#fff;transform:scaleX(0.8276);">VERRERIE</span>
<svg style="left:417px;top:254px" width="16" height="15"><use href="#ck"/></svg>
<span class="t r" style="top:255px;right:407px;color:#fff;transform:scaleX(0.83);">70.23</span>
<span class="t r" style="top:255px;right:350px;color:#fff;transform:scaleX(0.83);">84.00</span>
<span class="t" style="top:255px;left:574px;color:#fff;transform:scaleX(0.8451);">DURAND</span>
<span class="t r" style="top:255px;right:222px;color:#fff;transform:scaleX(0.83);">49.41</span>
<span class="t" style="top:255px;left:702px;color:#fff;transform:scaleX(0.8086);">F001-436</span>
<div style="left:15px;top:272px;width:15px;height:17px;background:linear-gradient(#fbfbfb,#ececec)"></div>
<div style="left:15px;top:289px;width:16px;height:1px;background:#000"></div>
<div style="left:31px;top:272px;width:854px;height:18px;background:#d0e0ff"></div>
<div style="left:31px;top:289px;width:854px;height:1px;background:#c0c0c0"></div>
<span class="t" style="top:273px;left:34px;color:#000;transform:scaleX(0.8086);">F001-442</span>
<div style="left:88px;top:272px;width:124px;height:18px;overflow:hidden"><span class="t" style="left:2px;top:1px;color:#000;transform:scaleX(0.8196)">Vase 22 Tulip Giardino</span></div>
<span class="t" style="top:273px;left:215px;color:#000;transform:scaleX(0.8299);">3044030014306</span>
<span class="t" style="top:273px;left:297px;color:#000;transform:scaleX(0.8276);">VERRERIE</span>
<svg style="left:417px;top:272px" width="16" height="15"><use href="#ck"/></svg>
<span class="t r" style="top:273px;right:407px;color:#000;transform:scaleX(0.83);">43.48</span>
<span class="t r" style="top:273px;right:350px;color:#000;transform:scaleX(0.83);">52.00</span>
<span class="t" style="top:273px;left:574px;color:#000;transform:scaleX(0.8451);">DURAND</span>
<span class="t r" style="top:273px;right:222px;color:#000;transform:scaleX(0.83);">30.59</span>
<span class="t" style="top:273px;left:702px;color:#000;transform:scaleX(0.8086);">F001-442</span>
<div style="left:15px;top:290px;width:15px;height:17px;background:linear-gradient(#fbfbfb,#ececec)"></div>
<div style="left:15px;top:307px;width:16px;height:1px;background:#000"></div>
<div style="left:31px;top:290px;width:854px;height:18px;background:#fff"></div>
<div style="left:31px;top:307px;width:854px;height:1px;background:#c0c0c0"></div>
<span class="t" style="top:291px;left:34px;color:#000;transform:scaleX(0.8086);">F001-444</span>
<div style="left:88px;top:290px;width:124px;height:18px;overflow:hidden"><span class="t" style="left:2px;top:1px;color:#000;transform:scaleX(0.8257)">Vase 18 Anemone GIARDINO</span></div>
<span class="t" style="top:291px;left:215px;color:#000;transform:scaleX(0.8299);">3044030014320</span>
<span class="t" style="top:291px;left:297px;color:#000;transform:scaleX(0.8276);">VERRERIE</span>
<svg style="left:417px;top:290px" width="16" height="15"><use href="#ck"/></svg>
<span class="t r" style="top:291px;right:407px;color:#000;transform:scaleX(0.83);">31.77</span>
<span class="t r" style="top:291px;right:350px;color:#000;transform:scaleX(0.83);">38.00</span>
<span class="t" style="top:291px;left:574px;color:#000;transform:scaleX(0.8451);">DURAND</span>
<span class="t r" style="top:291px;right:222px;color:#000;transform:scaleX(0.83);">22.35</span>
<span class="t" style="top:291px;left:702px;color:#000;transform:scaleX(0.8086);">F001-444</span>
<div style="left:15px;top:308px;width:15px;height:17px;background:linear-gradient(#fbfbfb,#ececec)"></div>
<div style="left:15px;top:325px;width:16px;height:1px;background:#000"></div>
<div style="left:31px;top:308px;width:854px;height:18px;background:#d0e0ff"></div>
<div style="left:31px;top:325px;width:854px;height:1px;background:#c0c0c0"></div>
<span class="t" style="top:309px;left:34px;color:#000;transform:scaleX(0.8086);">F001-445</span>
<div style="left:88px;top:308px;width:124px;height:18px;overflow:hidden"><span class="t" style="left:2px;top:1px;color:#000;transform:scaleX(0.8189)">Vase 12 Springflower GIARDINO</span></div>
<span class="t" style="top:309px;left:215px;color:#000;transform:scaleX(0.8299);">3044030014337</span>
<span class="t" style="top:309px;left:297px;color:#000;transform:scaleX(0.8276);">VERRERIE</span>
<svg style="left:417px;top:308px" width="16" height="15"><use href="#ck"/></svg>
<span class="t r" style="top:309px;right:407px;color:#000;transform:scaleX(0.83);">30.10</span>
<span class="t r" style="top:309px;right:350px;color:#000;transform:scaleX(0.83);">36.00</span>
<span class="t" style="top:309px;left:574px;color:#000;transform:scaleX(0.8451);">DURAND</span>
<span class="t r" style="top:309px;right:222px;color:#000;transform:scaleX(0.83);">21.18</span>
<span class="t" style="top:309px;left:702px;color:#000;transform:scaleX(0.8086);">F001-445</span>
<div style="left:15px;top:326px;width:15px;height:17px;background:linear-gradient(#fbfbfb,#ececec)"></div>
<div style="left:15px;top:343px;width:16px;height:1px;background:#000"></div>
<div style="left:31px;top:326px;width:854px;height:18px;background:#fff"></div>
<div style="left:31px;top:343px;width:854px;height:1px;background:#c0c0c0"></div>
<span class="t" style="top:327px;left:34px;color:#000;transform:scaleX(0.8086);">F001-446</span>
<div style="left:88px;top:326px;width:124px;height:18px;overflow:hidden"><span class="t" style="left:2px;top:1px;color:#000;transform:scaleX(0.8223)">Vase 27 large GIARDINO</span></div>
<span class="t" style="top:327px;left:215px;color:#000;transform:scaleX(0.8299);">3044030014344</span>
<span class="t" style="top:327px;left:297px;color:#000;transform:scaleX(0.8276);">VERRERIE</span>
<svg style="left:417px;top:326px" width="16" height="15"><use href="#ck"/></svg>
<span class="t r" style="top:327px;right:407px;color:#000;transform:scaleX(0.83);">86.96</span>
<span class="t r" style="top:327px;right:350px;color:#000;transform:scaleX(0.8299);">104.00</span>
<span class="t" style="top:327px;left:574px;color:#000;transform:scaleX(0.8451);">DURAND</span>
<span class="t r" style="top:327px;right:222px;color:#000;transform:scaleX(0.83);">61.18</span>
<span class="t" style="top:327px;left:702px;color:#000;transform:scaleX(0.8086);">F001-446</span>
<div style="left:15px;top:344px;width:15px;height:17px;background:linear-gradient(#fbfbfb,#ececec)"></div>
<div style="left:15px;top:361px;width:16px;height:1px;background:#000"></div>
<div style="left:31px;top:344px;width:854px;height:18px;background:#d0e0ff"></div>
<div style="left:31px;top:361px;width:854px;height:1px;background:#c0c0c0"></div>
<span class="t" style="top:345px;left:34px;color:#000;transform:scaleX(0.8086);">F001-461</span>
<div style="left:88px;top:344px;width:124px;height:18px;overflow:hidden"><span class="t" style="left:2px;top:1px;color:#000;transform:scaleX(0.8085)">Carafe Iota</span></div>
<span class="t" style="top:345px;left:215px;color:#000;transform:scaleX(0.8299);">3044030006707</span>
<span class="t" style="top:345px;left:297px;color:#000;transform:scaleX(0.8276);">VERRERIE</span>
<svg style="left:417px;top:344px" width="16" height="15"><use href="#ck"/></svg>
<span class="t r" style="top:345px;right:407px;color:#000;transform:scaleX(0.83);">56.86</span>
<span class="t r" style="top:345px;right:350px;color:#000;transform:scaleX(0.83);">68.00</span>
<span class="t" style="top:345px;left:574px;color:#000;transform:scaleX(0.8451);">DURAND</span>
<span class="t r" style="top:345px;right:222px;color:#000;transform:scaleX(0.83);">40.00</span>
<span class="t" style="top:345px;left:702px;color:#000;transform:scaleX(0.8086);">F001-461</span>
<div style="left:15px;top:362px;width:15px;height:17px;background:linear-gradient(#fbfbfb,#ececec)"></div>
<div style="left:15px;top:379px;width:16px;height:1px;background:#000"></div>
<div style="left:31px;top:362px;width:854px;height:18px;background:#fff"></div>
<div style="left:31px;top:379px;width:854px;height:1px;background:#c0c0c0"></div>
<span class="t" style="top:363px;left:34px;color:#000;transform:scaleX(0.8086);">F001-462</span>
<div style="left:88px;top:362px;width:124px;height:18px;overflow:hidden"><span class="t" style="left:2px;top:1px;color:#000;transform:scaleX(0.8085)">Carafe Alfa</span></div>
<span class="t" style="top:363px;left:215px;color:#000;transform:scaleX(0.8299);">3044030006714</span>
<span class="t" style="top:363px;left:297px;color:#000;transform:scaleX(0.8276);">VERRERIE</span>
<svg style="left:417px;top:362px" width="16" height="15"><use href="#ck"/></svg>
<span class="t r" style="top:363px;right:407px;color:#000;transform:scaleX(0.83);">70.23</span>
<span class="t r" style="top:363px;right:350px;color:#000;transform:scaleX(0.83);">84.00</span>
<span class="t" style="top:363px;left:574px;color:#000;transform:scaleX(0.8451);">DURAND</span>
<span class="t r" style="top:363px;right:222px;color:#000;transform:scaleX(0.83);">49.41</span>
<span class="t" style="top:363px;left:702px;color:#000;transform:scaleX(0.8086);">F001-462</span>
<div style="left:15px;top:380px;width:15px;height:17px;background:linear-gradient(#fbfbfb,#ececec)"></div>
<div style="left:15px;top:397px;width:16px;height:1px;background:#000"></div>
<div style="left:31px;top:380px;width:854px;height:18px;background:#d0e0ff"></div>
<div style="left:31px;top:397px;width:854px;height:1px;background:#c0c0c0"></div>
<span class="t" style="top:381px;left:34px;color:#000;transform:scaleX(0.8086);">F001-463</span>
<div style="left:88px;top:380px;width:124px;height:18px;overflow:hidden"><span class="t" style="left:2px;top:1px;color:#000;transform:scaleX(0.7975)">Carafe Omega</span></div>
<span class="t" style="top:381px;left:215px;color:#000;transform:scaleX(0.8299);">3044030006721</span>
<span class="t" style="top:381px;left:297px;color:#000;transform:scaleX(0.8276);">VERRERIE</span>
<svg style="left:417px;top:380px" width="16" height="15"><use href="#ck"/></svg>
<span class="t r" style="top:381px;right:407px;color:#000;transform:scaleX(0.83);">70.23</span>
<span class="t r" style="top:381px;right:350px;color:#000;transform:scaleX(0.83);">84.00</span>
<span class="t" style="top:381px;left:574px;color:#000;transform:scaleX(0.8451);">DURAND</span>
<span class="t r" style="top:381px;right:222px;color:#000;transform:scaleX(0.83);">49.41</span>
<span class="t" style="top:381px;left:702px;color:#000;transform:scaleX(0.8086);">F001-463</span>
<div style="left:15px;top:398px;width:15px;height:17px;background:linear-gradient(#fbfbfb,#ececec)"></div>
<div style="left:15px;top:415px;width:16px;height:1px;background:#000"></div>
<div style="left:31px;top:398px;width:854px;height:18px;background:#fff"></div>
<div style="left:31px;top:415px;width:854px;height:1px;background:#c0c0c0"></div>
<span class="t" style="top:399px;left:34px;color:#000;transform:scaleX(0.8086);">F001-464</span>
<div style="left:88px;top:398px;width:124px;height:18px;overflow:hidden"><span class="t" style="left:2px;top:1px;color:#000;transform:scaleX(0.8147)">Carafe GORDON 340</span></div>
<span class="t" style="top:399px;left:215px;color:#000;transform:scaleX(0.8299);">3044030007520</span>
<span class="t" style="top:399px;left:297px;color:#000;transform:scaleX(0.8276);">VERRERIE</span>
<svg style="left:417px;top:398px" width="16" height="15"><use href="#ck"/></svg>
<span class="t r" style="top:399px;right:407px;color:#000;transform:scaleX(0.83);">86.96</span>
<span class="t r" style="top:399px;right:350px;color:#000;transform:scaleX(0.8299);">104.00</span>
<span class="t" style="top:399px;left:574px;color:#000;transform:scaleX(0.8451);">DURAND</span>
<span class="t r" style="top:399px;right:222px;color:#000;transform:scaleX(0.83);">61.18</span>
<span class="t" style="top:399px;left:702px;color:#000;transform:scaleX(0.8086);">F001-464</span>
<div style="left:15px;top:416px;width:15px;height:17px;background:linear-gradient(#fbfbfb,#ececec)"></div>
<div style="left:15px;top:433px;width:16px;height:1px;background:#000"></div>
<div style="left:31px;top:416px;width:854px;height:18px;background:#d0e0ff"></div>
<div style="left:31px;top:433px;width:854px;height:1px;background:#c0c0c0"></div>
<span class="t" style="top:417px;left:34px;color:#000;transform:scaleX(0.8086);">F001-465</span>
<div style="left:88px;top:416px;width:124px;height:18px;overflow:hidden"><span class="t" style="left:2px;top:1px;color:#000;transform:scaleX(0.8147)">Carafe GORDON 385</span></div>
<span class="t" style="top:417px;left:215px;color:#000;transform:scaleX(0.8299);">3044030007537</span>
<span class="t" style="top:417px;left:297px;color:#000;transform:scaleX(0.8276);">VERRERIE</span>
<svg style="left:417px;top:416px" width="16" height="15"><use href="#ck"/></svg>
<span class="t r" style="top:417px;right:407px;color:#000;transform:scaleX(0.83);">96.99</span>
<span class="t r" style="top:417px;right:350px;color:#000;transform:scaleX(0.8506);">116.00</span>
<span class="t" style="top:417px;left:574px;color:#000;transform:scaleX(0.8451);">DURAND</span>
<span class="t r" style="top:417px;right:222px;color:#000;transform:scaleX(0.83);">68.24</span>
<span class="t" style="top:417px;left:702px;color:#000;transform:scaleX(0.8086);">F001-465</span>
<div style="left:15px;top:434px;width:15px;height:17px;background:linear-gradient(#fbfbfb,#ececec)"></div>
<div style="left:15px;top:451px;width:16px;height:1px;background:#000"></div>
<div style="left:31px;top:434px;width:854px;height:18px;background:#fff"></div>
<div style="left:31px;top:451px;width:854px;height:1px;background:#c0c0c0"></div>
<span class="t" style="top:435px;left:34px;color:#000;transform:scaleX(0.8086);">F001-483</span>
<div style="left:88px;top:434px;width:124px;height:18px;overflow:hidden"><span class="t" style="left:2px;top:1px;color:#000;transform:scaleX(0.8278)">Bougeoir de Table 9 Bombay</span></div>
<span class="t" style="top:435px;left:297px;color:#000;transform:scaleX(0.8276);">VERRERIE</span>
<svg style="left:417px;top:434px" width="16" height="15"><use href="#ck"/></svg>
<span class="t" style="top:435px;left:574px;color:#000;transform:scaleX(0.8451);">DURAND</span>
<span class="t" style="top:435px;left:702px;color:#000;transform:scaleX(0.8086);">F001-483</span>
<div style="left:15px;top:452px;width:15px;height:16px;background:linear-gradient(#fbfbfb,#ececec)"></div>
<div style="left:31px;top:452px;width:854px;height:17px;background:#d0e0ff"></div>
<span class="t" style="top:453px;left:34px;color:#000;transform:scaleX(0.8086);">F001-485</span>
<div style="left:88px;top:452px;width:124px;height:17px;overflow:hidden"><span class="t" style="left:2px;top:1px;color:#000;transform:scaleX(0.8279)">Bougeoir de Table 14 Bombay</span></div>
<span class="t" style="top:453px;left:215px;color:#000;transform:scaleX(0.8299);">2004000000013</span>
<span class="t" style="top:453px;left:297px;color:#000;transform:scaleX(0.8276);">VERRERIE</span>
<svg style="left:417px;top:452px" width="16" height="15"><use href="#ck"/></svg>
<span class="t r" style="top:453px;right:407px;color:#000;transform:scaleX(0.83);">10.03</span>
<span class="t r" style="top:453px;right:350px;color:#000;transform:scaleX(0.83);">12.00</span>
<span class="t" style="top:453px;left:574px;color:#000;transform:scaleX(0.8451);">DURAND</span>
<span class="t r" style="top:453px;right:222px;color:#000;transform:scaleX(0.83);">10.00</span>
<span class="t" style="top:453px;left:702px;color:#000;transform:scaleX(0.8086);">F001-485</span>
<div style="left:87px;top:182px;width:1px;height:287px;background:#c0c0c0"></div>
<div style="left:212px;top:182px;width:1px;height:287px;background:#c0c0c0"></div>
<div style="left:294px;top:182px;width:1px;height:287px;background:#c0c0c0"></div>
<div style="left:354px;top:182px;width:1px;height:287px;background:#c0c0c0"></div>
<div style="left:395px;top:182px;width:1px;height:287px;background:#c0c0c0"></div>
<div style="left:455px;top:182px;width:1px;height:287px;background:#c0c0c0"></div>
<div style="left:514px;top:182px;width:1px;height:287px;background:#c0c0c0"></div>
<div style="left:571px;top:182px;width:1px;height:287px;background:#c0c0c0"></div>
<div style="left:644px;top:182px;width:1px;height:287px;background:#c0c0c0"></div>
<div style="left:699px;top:182px;width:1px;height:287px;background:#c0c0c0"></div>
<div style="left:810px;top:182px;width:1px;height:287px;background:#c0c0c0"></div>
<div style="left:885px;top:182px;width:1px;height:287px;background:#c0c0c0"></div>
<div style="left:30px;top:164px;width:1px;height:305px;background:#000"></div>
<svg style="left:22px;top:257px" width="7" height="11" viewBox="0 0 7 11"><path d="M0 0L6.5 5.5L0 11z" fill="#000"/></svg>
<div style="left:15px;top:475px;width:888px;height:10px;background:linear-gradient(#f8f8f8,#ebebeb)"></div>
<div style="left:15px;top:485px;width:888px;height:1px;background:#d4d4d4"></div>
<div style="left:30px;top:469px;width:1px;height:16px;background:#e4e4e4"></div>
<div style="left:87px;top:469px;width:1px;height:16px;background:#e4e4e4"></div>
<div style="left:212px;top:469px;width:1px;height:16px;background:#e4e4e4"></div>
<div style="left:294px;top:469px;width:1px;height:16px;background:#e4e4e4"></div>
<div style="left:354px;top:469px;width:1px;height:16px;background:#e4e4e4"></div>
<div style="left:395px;top:469px;width:1px;height:16px;background:#e4e4e4"></div>
<div style="left:455px;top:469px;width:1px;height:16px;background:#e4e4e4"></div>
<div style="left:514px;top:469px;width:1px;height:16px;background:#e4e4e4"></div>
<div style="left:571px;top:469px;width:1px;height:16px;background:#e4e4e4"></div>
<div style="left:644px;top:469px;width:1px;height:16px;background:#e4e4e4"></div>
<div style="left:699px;top:469px;width:1px;height:16px;background:#e4e4e4"></div>
<div style="left:810px;top:469px;width:1px;height:16px;background:#e4e4e4"></div>
<div style="left:885px;top:469px;width:1px;height:16px;background:#e4e4e4"></div>
<span class="t" style="top:471px;left:578px;transform:scaleX(0.834);">= &#x27;DURAN...</span>
<div style="left:886px;top:164px;width:17px;height:305px;background:linear-gradient(90deg,#ededed,#f4f4f4 40%,#f1f1f1)"></div>
<svg style="left:891px;top:171px" width="8" height="4" viewBox="0 0 8 4"><path d="M0 4L4 0L8 4z" fill="#444"/></svg>
<svg style="left:891px;top:458px" width="8" height="4" viewBox="0 0 8 4"><path d="M0 0L4 4L8 0z" fill="#444"/></svg>
<div style="left:887px;top:309px;width:14px;height:15px;border:1px solid #8e8e8e;border-radius:2px;background:linear-gradient(90deg,#f6f6f6,#e6e6e6 50%,#d4d4d4 50%,#e0e0e0);box-shadow:inset 0 0 0 1px rgba(255,255,255,.7)"></div>
<div class="menu" style="left:229px;top:264px;width:139px;height:50px"></div>
<div class="mh" style="left:232px;top:289px;width:133px;height:22px"></div>
<div class="gut" style="left:258px;top:267px;height:44px;opacity:.8"></div>
<span class="m" style="left:263px;top:271px;transform-origin:0 0;transform:scaleX(1.06)">Imprimer</span>
<span class="m" style="left:263px;top:293px;transform-origin:0 0;transform:scaleX(.97)">Exporter</span>
<svg style="left:352px;top:296px" width="5" height="8" viewBox="0 0 5 8"><path d="M0 0L4.6 4L0 8z" fill="#000"/></svg>
<div class="menu" style="left:362px;top:286px;width:181px;height:116px"></div>
<div class="mh" style="left:365px;top:289px;width:176px;height:22px"></div>
<div class="gut" style="left:391px;top:289px;height:110px;opacity:.8"></div>
<span class="m" style="left:397px;top:293px;transform-origin:0 0;transform:scaleX(0.995)">Fichier Ascii</span>
<span class="m" style="left:397px;top:315px;transform-origin:0 0;transform:scaleX(1.027)">Document Word</span>
<span class="m" style="left:397px;top:337px;transform-origin:0 0;transform:scaleX(0.98)">Document RTF</span>
<span class="m" style="left:397px;top:359px;transform-origin:0 0;transform:scaleX(1.02)">Document HTML</span>
<span class="m" style="left:397px;top:381px;transform-origin:0 0;transform:scaleX(0.957)">Tableau Excel</span>
</body></html>
